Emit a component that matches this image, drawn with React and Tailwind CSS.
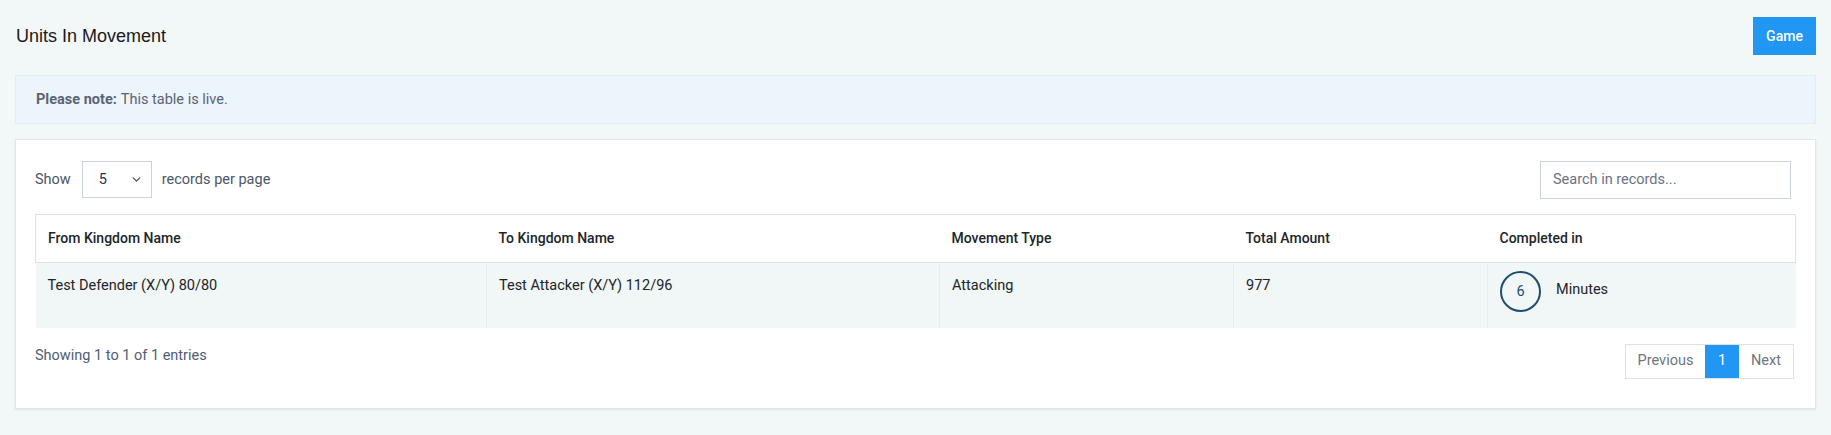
import { ChevronDown } from 'lucide-react';

// ─── Data ─────────────────────────────────────────────────────────────────────

const columns = [
  { key: 'from', label: 'From Kingdom Name', width: 'w-[451px]' },
  { key: 'to', label: 'To Kingdom Name', width: 'w-[453px]' },
  { key: 'type', label: 'Movement Type', width: 'w-[294px]' },
  { key: 'amount', label: 'Total Amount', width: 'w-[254px]' },
  { key: 'time', label: 'Completed in', width: 'w-[308px]' },
];

const rows = [
  {
    id: 1,
    from: 'Test Defender (X/Y) 80/80',
    to: 'Test Attacker (X/Y) 112/96',
    type: 'Attacking',
    amount: 977,
    minutes: 6,
  },
];

// ─── Pieces ───────────────────────────────────────────────────────────────────

const TimeLeft = ({ minutes }) => (
  <div className="flex items-center -mt-[4px]">
    <div className="w-[41px] h-[41px] rounded-full border-2 border-[#1d4e6e] flex items-center justify-center text-[14.5px] text-[#1d4e6e]">
      {minutes}
    </div>
    <span className="ml-[15px] -mt-[4px]">Minutes</span>
  </div>
);

const Controls = () => (
  <div className="flex items-center justify-between h-[37px]">
    <div className="flex items-center text-[14.5px] text-[#4a5568]">
      <span>Show</span>
      <div className="ml-[11px] mr-[10px] w-[70px] h-[37px] border border-[#ccd3da] flex items-center justify-between pl-[16px] pr-[8px] text-[#2d3748]">
        <span>5</span>
        <ChevronDown size={13} strokeWidth={2.5} className="text-[#4a5568]" />
      </div>
      <span>records per page</span>
    </div>
    <div className="w-[251px] h-[38px] border border-[#ccd3da] flex items-center px-[12px] text-[14.5px] text-[#6b7280] mr-[5px]">
      Search in records...
    </div>
  </div>
);

const MovementTable = () => (
  <table className="w-[1759px] table-fixed border-collapse mt-[16px] text-[14.5px] text-[#212529]">
    <colgroup>
      {columns.map((c) => <col key={c.key} className={c.width} />)}
    </colgroup>
    <thead>
      <tr className="h-[48px] border border-[#dee2e6]">
        {columns.map((c) => (
          <th key={c.key} className="text-left text-[14px] font-medium px-[12px] align-middle">{c.label}</th>
        ))}
      </tr>
    </thead>
    <tbody>
      {rows.map((r) => (
        <tr key={r.id} className="h-[65px] bg-[#f1f6f6]">
          <td className="px-[12px] pt-[12px] align-top border-r border-[#e7ecec]">{r.from}</td>
          <td className="px-[12px] pt-[12px] align-top border-r border-[#e7ecec]">{r.to}</td>
          <td className="px-[12px] pt-[12px] align-top border-r border-[#e7ecec]">{r.type}</td>
          <td className="px-[12px] pt-[12px] align-top border-r border-[#e7ecec]">{r.amount}</td>
          <td className="px-[12px] pt-[12px] align-top"><TimeLeft minutes={r.minutes} /></td>
        </tr>
      ))}
    </tbody>
  </table>
);

const Pagination = () => (
  <div className="flex h-[35px] border border-[#dee2e6] text-[14.5px]">
    <button className="w-[79px] text-[#6c757d]">Previous</button>
    <button className="w-[34px] bg-[#2196f3] text-white">1</button>
    <button className="w-[54px] text-[#6c757d]">Next</button>
  </div>
);

// ─── Page ─────────────────────────────────────────────────────────────────────

const App = () => (
  <div className="min-h-[435px] bg-[#f2f7f7] px-[15px] pt-[17px] font-['Roboto',sans-serif]">
    <div className="flex items-center justify-between h-[38px]">
      <h1 className="ml-[1px] text-[18px] text-[#1a1a1a] font-['Liberation_Sans',Arial,sans-serif]">Units In Movement</h1>
      <button className="w-[63px] h-[38px] bg-[#2196f3] text-white text-[14px] font-medium">Game</button>
    </div>

    <div className="mt-[20px] h-[49px] bg-[#edf5fc] border border-[#e2edf7] flex items-center px-[20px] text-[14.5px] text-[#5a6474]">
      <strong className="font-bold mr-[4px]">Please note:</strong> This table is live.
    </div>

    <div className="mt-[15px] h-[270px] bg-white border border-[#e1e6e8] shadow-[0_1px_2px_rgba(0,0,0,0.08)] px-[19px] pt-[21px]">
      <Controls />
      <MovementTable />
      <div className="w-[1759px] flex items-start justify-between mt-[16px]">
        <span className="text-[14.5px] text-[#4f5d73] pt-[1px]">Showing 1 to 1 of 1 entries</span>
        <Pagination />
      </div>
    </div>
  </div>
);

export default App;
